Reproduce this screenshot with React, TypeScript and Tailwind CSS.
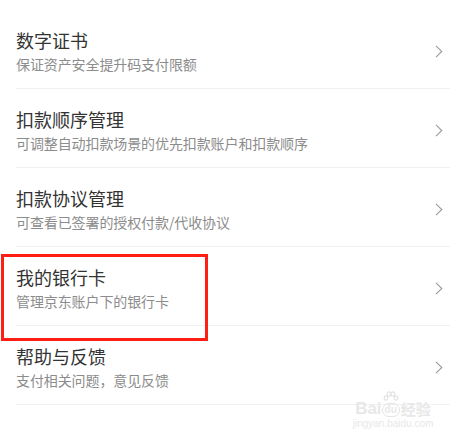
const items = [
  { title: "数字证书", desc: "保证资产安全提升码支付限额" },
  { title: "扣款顺序管理", desc: "可调整自动扣款场景的优先扣款账户和扣款顺序" },
  { title: "扣款协议管理", desc: "可查看已签署的授权付款/代收协议" },
  { title: "我的银行卡", desc: "管理京东账户下的银行卡" },
  { title: "帮助与反馈", desc: "支付相关问题，意见反馈" },
];

function Chevron() {
  return (
    <svg width="8" height="13" viewBox="0 0 8 13" fill="none" className="shrink-0">
      <path d="M1 0.8 L6.8 6.5 L1 12.2" stroke="#9a9a9a" strokeWidth="1.1" />
    </svg>
  );
}

function Paw() {
  return (
    <svg width="16" height="12" viewBox="0 0 16 12" fill="none" stroke="#e4e4e4" strokeWidth="1.2">
      <ellipse cx="3" cy="7" rx="1.8" ry="2.2" />
      <ellipse cx="6" cy="3" rx="1.8" ry="2.2" />
      <ellipse cx="10" cy="3" rx="1.8" ry="2.2" />
      <ellipse cx="13" cy="7" rx="1.8" ry="2.2" />
    </svg>
  );
}

function Row({ title, desc }: { title: string; desc: string }) {
  return (
    <div className="flex items-center border-b border-[#f0f0f0] pt-[18px] pb-[14px] pr-[7px]">
      <div className="flex-1 min-w-0">
        <div className="text-[18px] leading-[24px] text-[#333333]">{title}</div>
        <div className="mt-[2px] text-[14px] leading-[20px] text-[#8c8c8c] tracking-[-0.1px]">{desc}</div>
      </div>
      <Chevron />
    </div>
  );
}

export default function App() {
  return (
    <div
      className="relative w-[470px] h-[446px] bg-white overflow-hidden"
      style={{ fontFamily: '"Noto Sans CJK SC", "Noto Sans", sans-serif' }}
    >
      <div className="pt-[10px] pl-[16px] w-[450px]">
        {items.map((it) => (
          <Row key={it.title} title={it.title} desc={it.desc} />
        ))}
      </div>

      {/* red highlight box */}
      <div className="absolute left-[1px] top-[254px] w-[207px] h-[87px] border-[3px] border-[#ff1e14]" />

      {/* watermark */}
      <div className="absolute left-[352px] top-[391px] w-[82px] flex flex-col items-center text-[#e8e8e8] select-none">
        <div className="flex items-end leading-none">
          <span
            className="text-[17px] font-bold leading-[16px]"
            style={{ fontFamily: '"Liberation Sans", sans-serif' }}
          >
            Bai
          </span>
          <span className="flex flex-col items-center">
            <Paw />
            <span
              className="rounded-full border-[1.5px] border-[#e4e4e4] px-[2px] text-[10px] font-bold leading-[12px]"
              style={{ fontFamily: '"Liberation Sans", sans-serif' }}
            >
              du
            </span>
          </span>
          <span className="ml-[1px] text-[15px] font-bold leading-[16px]">经验</span>
        </div>
        <div
          className="mt-[2px] text-[10px] leading-[10px]"
          style={{ fontFamily: '"Liberation Sans", sans-serif' }}
        >
          jingyan.baidu.com
        </div>
      </div>
    </div>
  );
}
